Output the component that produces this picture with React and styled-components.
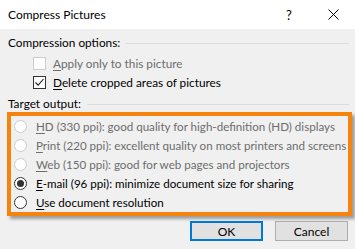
import React from "react";
import styled, { createGlobalStyle } from "styled-components";

const Global = createGlobalStyle`
  html, body { margin: 0; padding: 0; background: #f0f0f0; }
  body { font-family: Lato, "Noto Sans", sans-serif; font-size: 11.8px; }
  #root { width: 355px; height: 249px; overflow: hidden; }
`;

const Dialog = styled.div`
  width: 355px;
  height: 249px;
  display: flex;
  flex-direction: column;
  background: #f0f0f0;
  color: #000;
`;

const TitleBar = styled.div`
  height: 29px;
  background: #fff;
  display: flex;
  align-items: center;
  padding-left: 8px;
  box-sizing: border-box;
`;

const Title = styled.div`
  flex: 1;
  font-size: 12px;
  line-height: 16px;
`;

const TitleButton = styled.div`
  width: 44px;
  height: 29px;
  display: flex;
  align-items: center;
  justify-content: center;
  font-size: 13px;
`;

const Body = styled.div`
  flex: 1;
  display: flex;
  flex-direction: column;
  padding: 6px 0 0 0;
`;

const GroupHeader = styled.div`
  display: flex;
  align-items: center;
  gap: 6px;
  padding: 0 6px 0 8px;
  height: 16px;
  line-height: 16px;
  margin-top: ${(p) => p.$mt || 0}px;
  margin-bottom: ${(p) => p.$mb || 0}px;
`;

const Rule = styled.div`
  flex: 1;
  height: 1px;
  background: #dcdcdc;
`;

const CheckRow = styled.label`
  display: flex;
  align-items: center;
  gap: 7px;
  height: 19px;
  padding-left: 33px;
  color: ${(p) => (p.$disabled ? "#6d6d6d" : "#000")};
`;

const Box = styled.span`
  flex-shrink: 0;
  width: 11px;
  height: 11px;
  border: 1px solid ${(p) => (p.$disabled ? "#cccccc" : "#333")};
  background: #fff;
  display: flex;
  align-items: center;
  justify-content: center;
`;

const Key = styled.span`
  text-decoration: underline;
  text-underline-offset: 2px;
`;

const Highlight = styled.div`
  margin: 0 3px 0 7px;
  border: 4px solid #f7830f;
  box-shadow: 3px 3px 3px rgba(0, 0, 0, 0.35);
  padding: 1px 0 0 3px;
  display: flex;
  flex-direction: column;
`;

const RadioRow = styled.label`
  display: flex;
  align-items: center;
  gap: 9px;
  height: 19px;
  font-size: 11.6px;
  color: ${(p) => (p.$disabled ? "#6d6d6d" : "#000")};
  white-space: nowrap;
`;

const Circle = styled.span`
  flex-shrink: 0;
  width: 11px;
  height: 11px;
  border-radius: 50%;
  border: 1px solid ${(p) => (p.$disabled ? "#cccccc" : "#333")};
  background: #fff;
  display: flex;
  align-items: center;
  justify-content: center;
`;

const Dot = styled.span`
  width: 7px;
  height: 7px;
  border-radius: 50%;
  background: #333;
`;

const Buttons = styled.div`
  display: flex;
  justify-content: flex-end;
  gap: 12px;
  padding: 5px 7px 0 0;
`;

const Button = styled.button`
  width: 73px;
  height: 20px;
  box-sizing: border-box;
  background: #e1e1e1;
  border: ${(p) => (p.$default ? "2px solid #0078d7" : "1px solid #adadad")};
  font-family: inherit;
  font-size: 12px;
  color: #000;
  padding: 0;
`;

const Check = () => (
  <svg width="11" height="11" viewBox="0 0 11 11">
    <path d="M1.5 5.5 L4.2 8.2 L9.5 2" fill="none" stroke="#222" strokeWidth="1.1" />
  </svg>
);

const CloseX = () => (
  <svg width="11" height="11" viewBox="0 0 11 11">
    <path d="M0.5 0.5 L10.5 10.5 M10.5 0.5 L0.5 10.5" stroke="#000" strokeWidth="1" />
  </svg>
);

const radios = [
  { k: "H", rest: "D (330 ppi): good quality for high-definition (HD) displays", disabled: true },
  { k: "P", rest: "rint (220 ppi): excellent quality on most printers and screens", disabled: true },
  { k: "W", rest: "eb (150 ppi): good for web pages and projectors", disabled: true },
  { k: "E", rest: "-mail (96 ppi): minimize document size for sharing", checked: true },
  { k: "U", rest: "se document resolution" },
];

export default function App() {
  return (
    <>
      <Global />
      <Dialog>
        <TitleBar>
          <Title>Compress Pictures</Title>
          <TitleButton>?</TitleButton>
          <TitleButton>
            <CloseX />
          </TitleButton>
        </TitleBar>
        <Body>
          <GroupHeader $mb={3}>
            Compression options:
            <Rule />
          </GroupHeader>
          <CheckRow $disabled>
            <Box $disabled />
            <span>
              <Key>A</Key>pply only to this picture
            </span>
          </CheckRow>
          <CheckRow>
            <Box>
              <Check />
            </Box>
            <span>
              <Key>D</Key>elete cropped areas of pictures
            </span>
          </CheckRow>
          <GroupHeader $mt={4}>
            Target output:
            <Rule />
          </GroupHeader>
          <Highlight>
            {radios.map((r) => (
              <RadioRow key={r.k} $disabled={r.disabled}>
                <Circle $disabled={r.disabled}>{r.checked && <Dot />}</Circle>
                <span>
                  <Key>{r.k}</Key>
                  {r.rest}
                </span>
              </RadioRow>
            ))}
          </Highlight>
          <Buttons>
            <Button $default>OK</Button>
            <Button>Cancel</Button>
          </Buttons>
        </Body>
      </Dialog>
    </>
  );
}
